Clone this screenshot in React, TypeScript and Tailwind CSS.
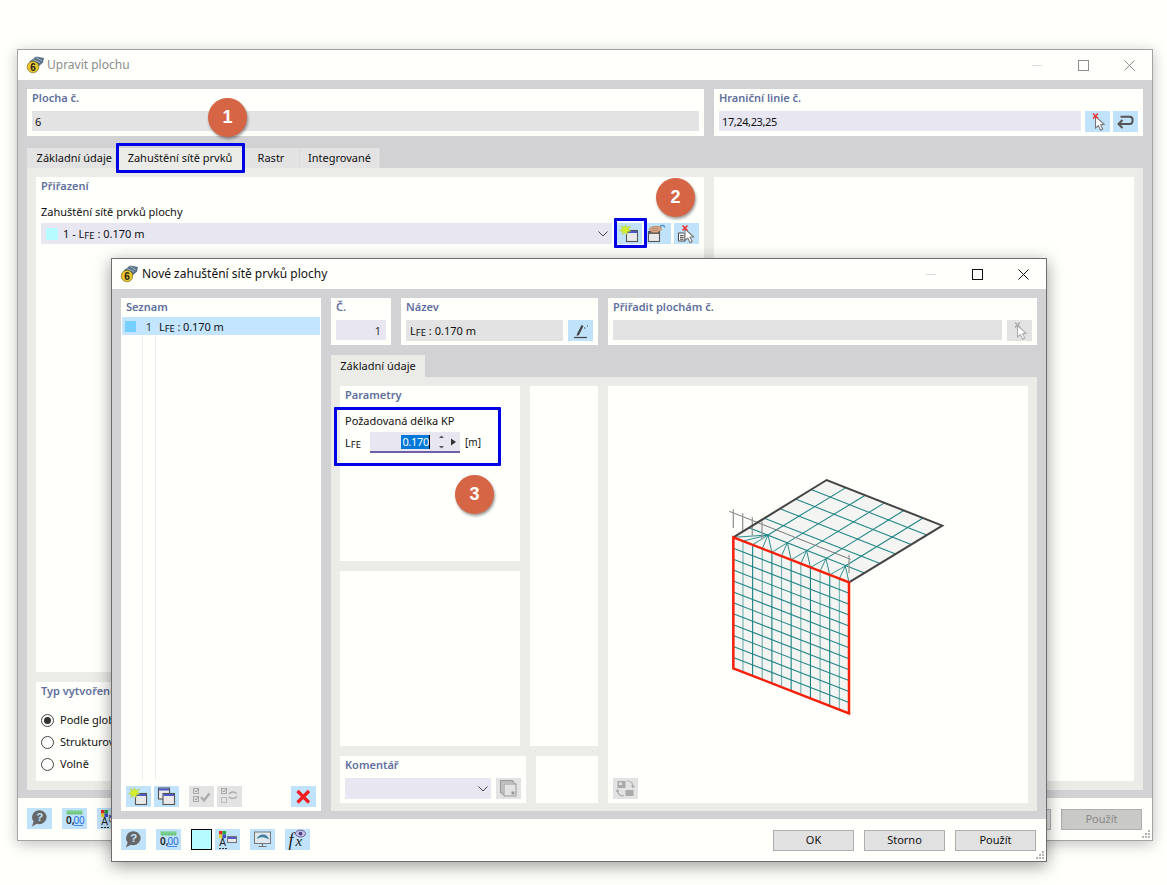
import React from "react";

const A: [number, number] = [100, 232];
const B: [number, number] = [380, 60];
const C: [number, number] = [727, 197];
const D: [number, number] = [447, 367];
const E: [number, number] = [447, 760];
const F: [number, number] = [100, 625];
const lerp = (p: [number, number], q: [number, number], t: number): [number, number] => [p[0] + (q[0] - p[0]) * t, p[1] + (q[1] - p[1]) * t];
const pts = (...a: [number, number][]) => a.map((p) => p.join(",")).join(" ");
const TEAL = "#1f8585";

function Mesh() {
  const range = (n: number) => Array.from({ length: n }, (_, i) => i);
  const peaks: [number, number][] = [[204, 225], [262, 248], [320, 272], [378, 296], [436, 318]];
  const ad = (i: number) => lerp(A, D, i / 12);
  const fans = [[0, 1, 2, 3, 4], [4, 5, 6], [6, 7, 8], [8, 9, 10], [10, 11, 12]];
  return (
    <svg viewBox="-276 -222 1260 1251" className="block w-[420px] h-[417px]" fill="none">
      <polygon points={pts(A, B, C, D)} fill="#f4f5f3" />
      <polygon points={pts(A, D, E, F)} fill="#f4f5f3" />
      {range(5).map((i) => {
        const t = (i + 1) / 6;
        return <line key={"a" + i} x1={lerp(A, B, t)[0]} y1={lerp(A, B, t)[1]} x2={lerp(D, C, t)[0]} y2={lerp(D, C, t)[1]} stroke={TEAL} strokeWidth="3.2" />;
      })}
      {range(5).map((i) => {
        const s = lerp(B, C, (i + 1) / 6);
        return <line key={"b" + i} x1={s[0]} y1={s[1]} x2={peaks[i][0]} y2={peaks[i][1]} stroke={TEAL} strokeWidth="3.2" />;
      })}
      {fans.map((f, i) =>
        f.map((k) => <line key={"f" + i + k} x1={peaks[i][0]} y1={peaks[i][1]} x2={ad(k)[0]} y2={ad(k)[1]} stroke={TEAL} strokeWidth="2.8" />)
      )}
      {range(11).map((i) => {
        const t = (i + 1) / 12;
        const p = lerp(A, D, t);
        const q = lerp(F, E, t);
        return <line key={"v" + i} x1={p[0]} y1={p[1]} x2={q[0]} y2={q[1]} stroke={TEAL} strokeWidth="3.4" opacity={i % 2 === 0 ? 0.6 : 1} />;
      })}
      {range(11).map((i) => {
        const t = (i + 1) / 12;
        const p = lerp(A, F, t);
        const q = lerp(D, E, t);
        return <line key={"h" + i} x1={p[0]} y1={p[1]} x2={q[0]} y2={q[1]} stroke={TEAL} strokeWidth="3.2" />;
      })}
      <line x1="88" y1="154" x2="452" y2="298" stroke="#777" strokeWidth="3" />
      {[[100, 148, 204], [128, 160, 216], [157, 172, 228], [186, 184, 238], [447, 284, 340]].map(([x, y1, y2]) => (
        <line key={x} x1={x} y1={y1} x2={x} y2={y2} stroke="#999" strokeWidth="4" />
      ))}
      <polyline points={pts(A, B, C, D)} stroke="#444" strokeWidth="6" />
      <polygon points={pts(A, D, E, F)} stroke="#f5200a" strokeWidth="7.5" />
    </svg>
  );
}

const S = ({ children }: { children: React.ReactNode }) => (
  <svg width="25" height="21" viewBox="0 0 25 21" fill="none">{children}</svg>
);

const Win = ({ x, y, w, h, bar = "#4d58c8", stroke = "#555" }: { x: number; y: number; w: number; h: number; bar?: string; stroke?: string }) => (
  <g>
    <rect x={x + 0.5} y={y + 0.5} width={w} height={h} fill="#e9e9e9" stroke={stroke} strokeWidth="1.1" />
    <rect x={x + 1} y={y + 1} width={w - 1} height="2" fill={bar} />
  </g>
);

const Star = () => (
  <polygon points="8.5,1.5 9.6,4.6 13.5,3 11.4,6.4 14,8.2 10.6,8.6 10.2,12 8,9.6 5,11.8 5.8,8.6 2.4,7.6 5.6,6 4,2.6 7.4,4.4" fill="#d4f02a" stroke="#a9bf2a" strokeWidth="0.4" />
);

const NewIcon = () => (
  <S>
    <Win x={9} y={7} w={11} h={11} />
    <Star />
  </S>
);

const Cursor = ({ x, y, c = "#777" }: { x: number; y: number; c?: string }) => (
  <path transform={`translate(${x} ${y}) scale(1.2)`} d="M0 0 L0 9.6 L2.4 7.6 L4.2 11.4 L6 10.4 L4.3 6.8 L7.2 6.5 Z" fill="#fff" stroke={c} strokeWidth="0.9" />
);

const RedX = ({ x, y, c = "#ef3030" }: { x: number; y: number; c?: string }) => (
  <path d={`M${x} ${y} l5 5 M${x + 5} ${y} l-5 5`} stroke={c} strokeWidth="1.5" />
);

const PickIcon = () => (
  <S>
    <Cursor x={10.5} y={5.5} />
    <RedX x={8} y={2.5} />
  </S>
);

const UndoIcon = () => (
  <S>
    <path d="M7.5 5.7 H17 C20.5 5.7 20.5 13 17 13 H6" stroke="#555" strokeWidth="2" />
    <path d="M9.5 9 L5.5 13 L9.5 17" stroke="#555" strokeWidth="2" fill="none" />
  </S>
);

const HandIcon = () => (
  <S>
    <Win x={2} y={8} w={11} h={10} bar="#666" />
    <path d="M3 6 C5 3.4 9 3 12 3.6 L15 3.4 L15.5 7 L11 9.6 L6 9.4 Z" fill="#d6a585" stroke="#9c6e4e" strokeWidth="0.5" />
    <path d="M6 5.5 H12 M6 7.4 H12" stroke="#a6755a" strokeWidth="0.5" />
    <path d="M14 3.5 C16 2 18 2 19 4.4" stroke="#4f8fd0" strokeWidth="1.3" />
  </S>
);

const DocPick = () => (
  <S>
    <path d="M4.5 10 H9.5 L11 11.5 V18 H4.5 Z" fill="#fff" stroke="#444" />
    <path d="M6 12.6 H9.6 M6 14.4 H9.6 M6 16.2 H9.6" stroke="#444" />
    <Cursor x={11} y={6} />
    <RedX x={8.5} y={2.5} />
  </S>
);

const HelpIcon = () => (
  <S>
    <path d="M12.8 2.2 a7.4 7 0 1 1 -3 13.6 L5 18.4 L6.6 13.4 A7.4 7 0 0 1 12.8 2.2 Z" fill="#666" />
    <text x="12.8" y="13.4" textAnchor="middle" fontSize="11.5" fontWeight="700" fontFamily="'Liberation Sans', sans-serif" fill="#c0e2fa">?</text>
  </S>
);

const DecIcon = () => (
  <S>
    <rect x="4.5" y="2.4" width="16" height="4" fill="#7ad08c" />
    <path d="M7 4.6 V6.4 M10 4.6 V6.4 M13 4.6 V6.4 M16 4.6 V6.4 M19 4.6 V6.4" stroke="#4b9c5a" strokeWidth="0.7" />
    <text x="4" y="15.6" fontSize="10" fontWeight="600" fontFamily="'Noto Sans', sans-serif" fill="#222">0,</text>
    <text x="11.4" y="15.6" fontSize="10" fontFamily="'Noto Sans', sans-serif" fill="#2b6fd8">00</text>
    <path d="M11.5 17.5 H21" stroke="#2b6fd8" strokeWidth="0.8" />
  </S>
);

const ColorTextIcon = () => (
  <S>
    <rect x="4" y="2" width="3.5" height="3.5" fill="#e2262a" />
    <rect x="7.5" y="2" width="3.5" height="3.5" fill="#29a639" />
    <rect x="4" y="5.5" width="3.5" height="3.5" fill="#e0d31e" />
    <rect x="7.5" y="5.5" width="3.5" height="3.5" fill="#3f4ad0" />
    <Win x={12} y={7} w={9} h={6} stroke="#777" />
    <text x="7.5" y="17" textAnchor="middle" fontSize="10" fontFamily="'Liberation Sans', sans-serif" fill="#222">A</text>
    <path d="M4 19.5 H6 M7 19.5 H9 M10 19.5 H12" stroke="#333" />
  </S>
);

const MonitorIcon = () => (
  <S>
    <rect x="4.5" y="3" width="16" height="11.5" fill="#dfe8ee" stroke="#777" />
    <path d="M6.5 10 C9 5 14 4.6 17 7 L19.5 10.5 L15 8.8 C12 7.8 10 8.6 6.5 10 Z" fill="#3f7f9f" />
    <path d="M12.5 14.5 V17 M8.5 17.5 H16.5" stroke="#777" strokeWidth="1.2" />
  </S>
);

const FxIcon = () => (
  <S>
    <text x="3.5" y="17" fontSize="18" fontStyle="italic" fontFamily="'Liberation Serif', serif" fill="#222">f</text>
    <text x="10.5" y="17" fontSize="15" fontStyle="italic" fontFamily="'Liberation Serif', serif" fill="#222">x</text>
    <ellipse cx="15.5" cy="4.6" rx="5" ry="3.4" fill="#c9c6e8" stroke="#5a4a90" strokeWidth="0.9" />
    <circle cx="15.5" cy="4.6" r="1.9" fill="#4a3f80" />
  </S>
);

const CopyWinIcon = () => (
  <S>
    <Win x={4} y={1.5} w={11} h={11} />
    <Win x={8.5} y={7} w={11.5} h={11} />
  </S>
);

const CheckIcon = () => (
  <S>
    <rect x="4.5" y="2.5" width="5" height="5" stroke="#aaa" />
    <rect x="4.5" y="10.5" width="5" height="5" stroke="#aaa" />
    <path d="M5.5 4.5 l1.5 1.5 l2.5 -3.5 M5.5 12.5 l1.5 1.5 l2.5 -3.5" stroke="#999" />
    <path d="M12 11 l3 3.5 l5.5 -7" stroke="#aaa" strokeWidth="2.2" />
  </S>
);

const SwapIcon = () => (
  <S>
    <rect x="4.5" y="2.5" width="5" height="5" stroke="#aaa" />
    <rect x="4.5" y="11.5" width="5" height="5" stroke="#bbb" />
    <path d="M5.5 4.5 l1.5 1.5 l2.5 -3.5" stroke="#999" />
    <path d="M12 8 C14 5.5 17 5.5 20 7.5 M20 10.5 C18 13 14 13 12 11" stroke="#aaa" strokeWidth="1.3" />
  </S>
);

const BigX = () => (
  <S>
    <path d="M6.5 5 L18 16.5 M18 5 L6.5 16.5" stroke="#f01c20" strokeWidth="3.2" />
  </S>
);

const RenameIcon = () => (
  <S>
    <path d="M9 14 L13.5 5 L15.5 6 L11 15 L8.6 16 Z" fill="#444" />
    <path d="M16 8 h1.5 M19 6 h1" stroke="#444" />
    <path d="M6 17.5 H19" stroke="#444" strokeWidth="1.2" />
  </S>
);

const CopyDocIcon = () => (
  <S>
    <rect x="4.5" y="2.5" width="12" height="12" stroke="#999" />
    <rect x="6" y="4" width="12" height="12" fill="#e3e3e3" stroke="#999" />
    <rect x="8" y="6" width="12" height="12" fill="#e3e3e3" stroke="#999" />
    <rect x="15.5" y="13.5" width="3" height="3" fill="#999" />
  </S>
);

const SyncIcon = () => (
  <S>
    <rect x="4.5" y="3" width="8" height="7" fill="#aaa" />
    <rect x="6" y="4.5" width="3" height="2.5" fill="#e3e3e3" />
    <rect x="12.5" y="12" width="8" height="6" fill="#aaa" />
    <path d="M14 3 C18 3 20 5 20 9 M18.4 7.6 L20 9.4 L21.6 7.6 M11 18 C6.5 18 4.5 16 4.5 12 M3 13.6 L4.5 11.8 L6 13.6" stroke="#aaa" strokeWidth="1.1" />
  </S>
);

const IconBtn = ({ children, off = false }: { children: React.ReactNode; off?: boolean }) => (
  <div className={"w-[25px] h-[21px] shrink-0 flex items-center justify-center " + (off ? "bg-[#e3e3e3]" : "bg-[#c0e2fa]")}>{children}</div>
);

const AppLogo = () => (
  <svg width="19" height="18" viewBox="0 0 19 18" fill="none">
    <path d="M3 6 L10 0.5 L18 2 L17 6.5 L11 12 Z" fill="#5a7088" />
    <path d="M7 3.5 L14 6.5 M10 1.5 L16 5" stroke="#a8bccd" strokeWidth="0.9" />
    <circle cx="7" cy="11" r="5.8" fill="#eac62c" stroke="#6d5a10" strokeWidth="0.6" />
    <text x="7" y="14.6" textAnchor="middle" fontSize="10" fontWeight="700" fontFamily="'Liberation Sans', sans-serif" fill="#222">6</text>
  </svg>
);

const Lfe = () => (
  <span>L<span className="text-[9.5px] relative top-[1px]">FE</span></span>
);

const Label = ({ children }: { children: React.ReactNode }) => (
  <div className="text-[#5f6f9e] font-semibold leading-[18px] h-[18px]">{children}</div>
);

const Chevron = () => (
  <svg width="10" height="6" viewBox="0 0 10 6" fill="none"><path d="M0.5 0.5 L5 5 L9.5 0.5" stroke="#444" /></svg>
);

const Controls = ({ dim }: { dim: boolean }) => {
  const c = dim ? "#8e8e8e" : "#111";
  return (
    <div className="ml-auto flex items-center h-full">
      <div className="w-[46px] flex justify-center"><div className="w-[10px] h-px bg-[#dcdcdc]" /></div>
      <div className="w-[46px] flex justify-center">
        <div className="w-[11px] h-[11px] border" style={{ borderColor: c }} />
      </div>
      <div className="w-[46px] flex justify-center">
        <svg width="11" height="11" viewBox="0 0 11 11"><path d="M0.5 0.5 L10.5 10.5 M10.5 0.5 L0.5 10.5" stroke={c} /></svg>
      </div>
    </div>
  );
};

const Grip = () => (
  <svg width="10" height="10" viewBox="0 0 10 10" className="absolute right-[1px] bottom-[1px]" fill="#b5b5b5">
    <rect x="7" y="1" width="2" height="2" />
    <rect x="4" y="4" width="2" height="2" />
    <rect x="7" y="4" width="2" height="2" />
    <rect x="1" y="7" width="2" height="2" />
    <rect x="4" y="7" width="2" height="2" />
    <rect x="7" y="7" width="2" height="2" />
  </svg>
);

const Badge = ({ n, cls }: { n: number; cls: string }) => (
  <div className={"absolute w-[39px] h-[39px] rounded-full bg-[#d66546] text-white text-[18px] font-bold flex items-center justify-center font-['Liberation_Sans',sans-serif] shadow-[1px_2px_3px_rgba(0,0,0,0.4)] z-30 " + cls}>{n}</div>
);

const Btn = ({ children, off = false }: { children: React.ReactNode; off?: boolean }) => (
  <div className={"w-[81px] h-[21px] flex items-center justify-center border border-[#aeaeae] " + (off ? "bg-[#c9c9c7] text-[#888]" : "bg-[#e1e1e1] text-[#111]")}>{children}</div>
);

const Radio = ({ on, children }: { on?: boolean; children: React.ReactNode }) => (
  <div className="flex items-center h-[22px] gap-[6px] whitespace-nowrap">
    <div className="w-[13px] h-[13px] rounded-full border border-[#444] bg-white flex items-center justify-center">
      {on && <div className="w-[7px] h-[7px] rounded-full bg-[#333]" />}
    </div>
    <span>{children}</span>
  </div>
);

function Tab({ children, w, active, cls = "justify-center" }: { children: React.ReactNode; w: string; active?: boolean; cls?: string }) {
  return (
    <div className={"h-[20px] flex items-center border-r border-[#dcdcdc] whitespace-nowrap " + cls + " " + w + (active ? " bg-[#ebebe8]" : " bg-[#e3e3e3]")}>
      {children}
    </div>
  );
}

function MainWindow() {
  return (
    <div className="absolute left-[17px] top-[49px] w-[1136px] h-[792px] border border-[#a3a3a3] bg-[#fffffb] flex flex-col shadow-[0_3px_14px_rgba(0,0,0,0.25)]">
      <div className="h-[30px] shrink-0 flex items-center">
        <div className="pl-[8px] pr-[2px] flex items-center"><AppLogo /></div>
        <span className="text-[#8c8c8c] text-[12px]">Upravit plochu</span>
        <Controls dim />
      </div>
      <div className="flex-1 bg-[#d2d2d5] px-[9px] pt-[9px] pb-[8px] flex flex-col min-h-0">
        <div className="flex gap-[10px] h-[47px] shrink-0">
          <div className="w-[677px] bg-[#fffffb] px-[5px]">
            <Label>Plocha č.</Label>
            <div className="h-[20px] mt-[4px] bg-[#e3e3e3] flex items-center px-[3px] pt-[2px]">6</div>
          </div>
          <div className="flex-1 bg-[#fffffb] pl-[5px]">
            <Label>Hraniční linie č.</Label>
            <div className="flex mt-[4px] pr-[5px]">
              <div className="w-[362px] h-[20px] bg-[#e7e6f1] flex items-center px-[3px] pt-[2px] tracking-[-0.4px]">17,24,23,25</div>
              <div className="ml-[4px]"><IconBtn><PickIcon /></IconBtn></div>
              <div className="ml-[3px]"><IconBtn><UndoIcon /></IconBtn></div>
            </div>
          </div>
        </div>
        <div className="flex mt-[12px] h-[20px] shrink-0">
          <Tab w="w-[89px]" cls="justify-end pr-[3px]">Základní údaje</Tab>
          <Tab w="w-[129px]" cls="justify-center" active>Zahuštění sítě prvků</Tab>
          <Tab w="w-[55px]" cls="justify-center pr-[2px]">Rastr</Tab>
          <Tab w="w-[80px]">Integrované</Tab>
        </div>
        <div className="flex-1 bg-[#ebebe8] p-[9px] flex gap-[10px] min-h-0">
          <div className="w-[668px] flex flex-col gap-[10px]">
            <div className="flex-1 bg-[#fffffb] px-[5px]">
              <Label>Přiřazení</Label>
              <div className="mt-[9px] leading-[16px]">Zahuštění sítě prvků plochy</div>
              <div className="flex mt-[3px] items-center">
                <div className="flex-1 h-[21px] bg-[#e7e6f1] flex items-center pl-[5px] pr-[4px] gap-[5px]">
                  <div className="w-[12px] h-[12px] bg-[#b6fbff]" />
                  <span className="mt-[2px]">1 - <Lfe /> : 0.170 m</span>
                  <div className="ml-auto"><Chevron /></div>
                </div>
                <div className="ml-[5px]"><IconBtn><NewIcon /></IconBtn></div>
                <div className="ml-[4px]"><IconBtn><HandIcon /></IconBtn></div>
                <div className="ml-[3px]"><IconBtn><DocPick /></IconBtn></div>
              </div>
            </div>
            <div className="h-[99px] shrink-0 bg-[#fffffb] px-[5px]">
              <Label>Typ vytvoření sítě</Label>
              <div className="mt-[9px]">
                <Radio on>Podle globálních nastavení</Radio>
                <Radio>Strukturovaná</Radio>
                <Radio>Volně</Radio>
              </div>
            </div>
          </div>
          <div className="flex-1 bg-[#fffffb]" />
        </div>
      </div>
      <div className="h-[42px] shrink-0 relative flex pl-[9px] pr-[10px] pt-[10px]">
        <div className="flex gap-[10px]">
          <IconBtn><HelpIcon /></IconBtn>
          <IconBtn><DecIcon /></IconBtn>
          <IconBtn><ColorTextIcon /></IconBtn>
        </div>
        <div className="ml-auto flex gap-[10px] pt-[1px]">
          <Btn>Storno</Btn>
          <Btn off>Použít</Btn>
        </div>
        <Grip />
      </div>
    </div>
  );
}

function Dialog() {
  return (
    <div className="absolute left-[111px] top-[258px] w-[936px] h-[604px] border border-[#6e6e6e] bg-[#fffffb] flex flex-col shadow-[0_4px_16px_rgba(0,0,0,0.4)] z-10">
      <div className="h-[30px] shrink-0 flex items-center">
        <div className="pl-[8px] pr-[3px] flex items-center"><AppLogo /></div>
        <span className="text-[12px] text-[#111]">Nové zahuštění sítě prvků plochy</span>
        <Controls dim={false} />
      </div>
      <div className="h-[530px] shrink-0 bg-[#d2d2d5] p-[9px] pb-[8px] flex gap-[10px]">
        <div className="w-[200px] bg-[#fffffb] flex flex-col">
          <div className="px-[5px]"><Label>Seznam</Label></div>
          <div className="mx-[1px] mt-[1px] h-[18px] bg-[#c4e5ff] flex items-center relative">
            <div className="w-[11px] h-[11px] bg-[#75d0ff] ml-[3px]" />
            <div className="w-[16px] text-right text-[#333] mt-[2px]">1</div>
            <div className="ml-[7px] mt-[2px] tracking-[-0.1px]"><Lfe /> : 0.170 m</div>
          </div>
          <div className="flex-1 ml-[21px] w-[14px] border-x border-[#ececec]" />
          <div className="h-[31px] shrink-0 flex pl-[5px] pr-[5px] pt-[6px]">
            <IconBtn><NewIcon /></IconBtn>
            <div className="ml-[3px]"><IconBtn><CopyWinIcon /></IconBtn></div>
            <div className="ml-[10px]"><IconBtn off><CheckIcon /></IconBtn></div>
            <div className="ml-[3px]"><IconBtn off><SwapIcon /></IconBtn></div>
            <div className="ml-auto"><IconBtn><BigX /></IconBtn></div>
          </div>
        </div>
        <div className="flex-1 flex flex-col min-w-0">
          <div className="flex gap-[10px] h-[47px] shrink-0">
            <div className="w-[60px] bg-[#fffffb] px-[5px]">
              <Label>Č.</Label>
              <div className="h-[20px] mt-[4px] bg-[#e7e6f1] flex items-center justify-end px-[5px] pt-[2px] text-[#333]">1</div>
            </div>
            <div className="w-[197px] bg-[#fffffb] px-[5px]">
              <Label>Název</Label>
              <div className="flex gap-[5px] mt-[4px]">
                <div className="flex-1 h-[21px] bg-[#e3e3e3] flex items-center pl-[4px] pt-[1px]"><span><Lfe /> : 0.170 m</span></div>
                <IconBtn><RenameIcon /></IconBtn>
              </div>
            </div>
            <div className="flex-1 bg-[#fffffb] px-[5px]">
              <Label>Přiřadit plochám č.</Label>
              <div className="flex gap-[5px] mt-[4px]">
                <div className="flex-1 h-[20px] bg-[#e3e3e3]" />
                <IconBtn off>
                  <S>
                    <Cursor x={10.5} y={5.5} c="#aaa" />
                    <RedX x={8} y={2.5} c="#aaa" />
                  </S>
                </IconBtn>
              </div>
            </div>
          </div>
          <div className="flex mt-[10px] h-[22px] shrink-0">
            <div className="w-[94px] bg-[#ebebe8] flex items-center justify-center">Základní údaje</div>
          </div>
          <div className="flex-1 bg-[#ebebe8] p-[9px] pb-[8px] flex gap-[10px] min-h-0">
            <div className="w-[258px] flex flex-col gap-[10px]">
              <div className="h-[360px] flex gap-[10px]">
                <div className="w-[180px] flex flex-col gap-[10px]">
                  <div className="h-[175px] bg-[#fffffb] px-[5px]">
                    <Label>Parametry</Label>
                    <div className="mt-[9px] leading-[16px] text-[#111]">Požadovaná délka KP</div>
                    <div className="flex items-center mt-[3px] h-[21px]">
                      <div className="w-[25px] mt-[2px]"><Lfe /></div>
                      <div className="w-[90px] h-[21px] bg-[#e7e6f1] border-b-2 border-[#6f5fa8] flex items-center justify-end pr-[3px] pt-[1px]">
                        <span className="bg-[#0078d7] text-white leading-[14px] border-r border-black tracking-[-0.3px] pl-[1px]">0.170</span>
                        <svg width="26" height="14" viewBox="0 0 26 14" className="ml-[1px]">
                          <path d="M8 3 L10.5 0.5 L13 3 Z M8 11 L10.5 13.5 L13 11 Z" fill="#555" />
                          <path d="M20 3.5 L25 7 L20 10.5 Z" fill="#333" />
                        </svg>
                      </div>
                      <span className="ml-[5px] text-[10px]">[m]</span>
                    </div>
                  </div>
                  <div className="flex-1 bg-[#fffffb]" />
                </div>
                <div className="w-[68px] bg-[#fffffb]" />
              </div>
              <div className="h-[47px] flex gap-[10px]">
                <div className="w-[186px] bg-[#fffffb] px-[5px]">
                  <Label>Komentář</Label>
                  <div className="flex gap-[5px] mt-[4px]">
                    <div className="flex-1 h-[21px] bg-[#e7e6f1] flex items-center justify-end pr-[3px]"><Chevron /></div>
                    <IconBtn off><CopyDocIcon /></IconBtn>
                  </div>
                </div>
                <div className="w-[62px] bg-[#fffffb]" />
              </div>
            </div>
            <div className="flex-1 bg-[#fffffb] relative">
              <Mesh />
              <div className="absolute left-[5px] bottom-[4px]"><IconBtn off><SyncIcon /></IconBtn></div>
            </div>
          </div>
        </div>
      </div>
      <div className="flex-1 relative flex pl-[9px] pr-[10px] pt-[10px]">
        <IconBtn><HelpIcon /></IconBtn>
        <div className="ml-[10px]"><IconBtn><DecIcon /></IconBtn></div>
        <div className="ml-[10px] w-[21px] h-[21px] bg-[#b6fbff] border border-black" />
        <div className="ml-[3px]"><IconBtn><ColorTextIcon /></IconBtn></div>
        <div className="ml-[10px]"><IconBtn><MonitorIcon /></IconBtn></div>
        <div className="ml-[10px]"><IconBtn><FxIcon /></IconBtn></div>
        <div className="ml-auto flex gap-[10px] pt-[1px]">
          <Btn>OK</Btn>
          <Btn>Storno</Btn>
          <Btn>Použít</Btn>
        </div>
        <Grip />
      </div>
    </div>
  );
}

const Box = ({ cls }: { cls: string }) => (
  <div className={"absolute border-[3px] border-[#0000e6] rounded-[1px] z-20 pointer-events-none " + cls} />
);

export default function App() {
  return (
    <div className="relative w-[1167px] h-[885px] overflow-hidden bg-[#fffffb] font-['Noto_Sans',sans-serif] text-[11px] text-[#111]">
      <MainWindow />
      <Box cls="left-[116px] top-[143px] w-[129px] h-[30px]" />
      <Box cls="left-[614px] top-[218px] w-[33px] h-[30px]" />
      <Dialog />
      <Box cls="left-[334px] top-[407px] w-[167px] h-[59px]" />
      <Badge n={1} cls="left-[208px] top-[98px]" />
      <Badge n={2} cls="left-[656px] top-[178px]" />
      <Badge n={3} cls="left-[455px] top-[475px]" />
    </div>
  );
}
